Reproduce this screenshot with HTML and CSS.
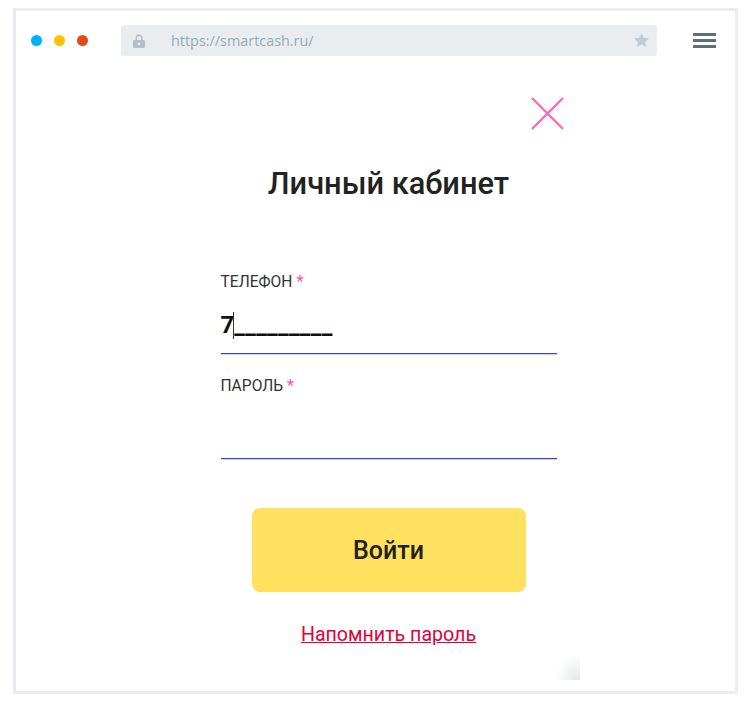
FILE: index.html
```html
<!DOCTYPE html>
<html lang="ru">
  <head>
    <meta charset="UTF-8" />
    <title>Личный кабинет</title>
    <link rel="stylesheet" href="styles.css">
  </head>
  <body>
    <div class="browser">
      <div class="toolbar">
        <div class="dots">
          <span class="dot blue"></span>
          <span class="dot yellow"></span>
          <span class="dot red"></span>
        </div>
        <div class="address">
          <svg class="lock" width="12" height="14" viewBox="0 0 12 14">
            <path d="M2.5 6V4a3.5 3.5 0 0 1 7 0v2H8V4a2 2 0 0 0-4 0v2z" fill="#b4c0c8"/>
            <path fill-rule="evenodd" d="M1 6h10a1 1 0 0 1 1 1v6a1 1 0 0 1-1 1H1a1 1 0 0 1-1-1V7a1 1 0 0 1 1-1zm5 2.6a1.3 1.3 0 1 0 0 2.6 1.3 1.3 0 0 0 0-2.6z" fill="#b4c0c8"/>
          </svg>
          <span class="url">https://smartcash.ru/</span>
          <svg class="star" width="15" height="14" viewBox="0 0 15 14">
            <path d="M7.5 0l2.2 4.8 5.3.6-3.9 3.5 1.1 5.1-4.7-2.6L2.8 14l1.1-5.1L0 5.4l5.3-.6z" fill="#c0ccd3"/>
          </svg>
        </div>
        <div class="burger">
          <span></span>
          <span></span>
          <span></span>
        </div>
      </div>

      <div class="modal">
        <div class="close-row">
          <svg width="33" height="33" viewBox="0 0 33 33">
            <path d="M1 1l31 31M32 1L1 32" stroke="#ff69b4" stroke-width="2.4" fill="none"/>
          </svg>
        </div>
        <h1>Личный кабинет</h1>

        <form class="login-form">
          <div class="field">
            <label>ТЕЛЕФОН <span class="req">*</span></label>
            <div class="input phone"><b>7</b><i class="caret"></i><span class="mask">_________</span></div>
          </div>
          <div class="field password">
            <label>ПАРОЛЬ <span class="req">*</span></label>
            <div class="input"></div>
          </div>
          <button type="button" class="submit">Войти</button>
          <a class="remind" href="#">Напомнить пароль</a>
        </form>
        <div class="corner"></div>
      </div>
    </div>
  </body>
</html>
```

FILE: styles.css
```css
body {
  margin: 0;
  background: #fff;
  font-family: Roboto, "Liberation Sans", sans-serif;
  color: #222;
}

.browser {
  box-sizing: border-box;
  width: 725px;
  height: 686px;
  margin: 8px 0 0 13px;
  border: 3px solid #e9edf0;
}

.toolbar {
  display: flex;
  align-items: center;
  height: 31px;
  padding: 14px 19px 0 15px;
}

.dots {
  display: flex;
  gap: 12px;
  width: 90px;
}

.dot {
  width: 11px;
  height: 11px;
  border-radius: 50%;
}

.dot.blue {
  background: #00aeff;
}

.dot.yellow {
  background: #ffc107;
}

.dot.red {
  background: #e64a19;
}

.address {
  display: flex;
  align-items: center;
  box-sizing: border-box;
  width: 536px;
  height: 31px;
  padding: 0 8px 0 12px;
  background: #e9edf0;
  border-radius: 3px;
}

.url {
  flex: 1;
  margin-left: 26px;
  font-family: "Open Sans", sans-serif;
  font-size: 14.4px;
  color: #9aa9b3;
}

.star {
  margin-top: -2px;
}

.burger {
  display: flex;
  flex-direction: column;
  gap: 3px;
  width: 23px;
  margin-left: 36px;
}

.burger span {
  height: 3px;
  background: #5b7080;
}

.modal {
  position: relative;
  display: flex;
  flex-direction: column;
  align-items: center;
  padding-left: 26px;
}

.close-row {
  align-self: flex-start;
  margin: 41px 0 0 489px;
  height: 33px;
}

h1 {
  margin: 35px 0 0;
  font-size: 30.8px;
  line-height: 38px;
  font-weight: 500;
  color: #222;
}

.login-form {
  display: flex;
  flex-direction: column;
  width: 336px;
  margin-top: 68px;
}

.field {
  height: 105px;
}

label {
  display: block;
  font-size: 15.6px;
  line-height: 20px;
  color: #333;
}

.req {
  font-size: 17px;
  color: #ff4fa8;
}

.input {
  display: flex;
  align-items: flex-end;
  box-sizing: border-box;
  height: 62px;
  padding-bottom: 14px;
  border-bottom: 1px solid #3c3fe0;
  box-shadow: 0 1px 0 rgba(60, 63, 224, 0.25);
}

.password label {
  margin-top: -1px;
}

.password .input {
  height: 63px;
}

.phone {
  font-size: 24px;
  line-height: 28px;
  color: #111;
}

.phone b {
  font-weight: 700;
}

.caret {
  width: 1px;
  height: 27px;
  margin: 0 0 0 -1px;
  background: #333;
}

.mask {
  font-weight: 700;
  font-size: 24px;
  letter-spacing: 0.25px;
}

.submit {
  align-self: center;
  width: 274px;
  height: 84px;
  margin-top: 27px;
  border: none;
  border-radius: 8px;
  background: #ffe05f;
  font-family: Roboto, sans-serif;
  font-size: 25px;
  font-weight: 500;
  color: #222;
}

.remind {
  align-self: center;
  margin-top: 30px;
  font-size: 19.6px;
  line-height: 26px;
  color: #e0003c;
}

.corner {
  position: absolute;
  right: 155px;
  top: 585px;
  width: 30px;
  height: 39px;
  background: radial-gradient(circle at 100% 100%, #e4e7ea, #fff 26px);
}
```
